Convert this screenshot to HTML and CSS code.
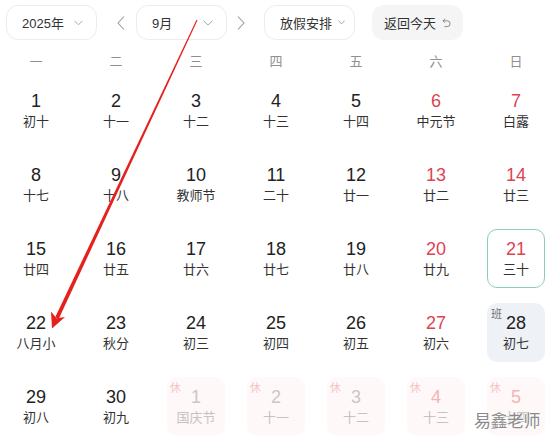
FILE: index.html
```html
<!DOCTYPE html>
<html lang="zh">
<head>
<meta charset="utf-8">
<title>日历</title>
<link rel="stylesheet" href="styles.css">
</head>
<body>
<div class="page">
  <div class="toolbar">
    <div class="select select-year"><span>2025年</span><svg class="caret" width="9" height="6" viewBox="0 0 9 6"><path d="M0.5 0.8 L4.5 4.8 L8.5 0.8" fill="none" stroke="#a8a8a8" stroke-width="1"/></svg></div>
    <svg class="nav nav-prev" width="8" height="14" viewBox="0 0 8 14"><path d="M7 0.5 L1 7 L7 13.5" fill="none" stroke="#9a9a9a" stroke-width="1.1"/></svg>
    <div class="select select-month"><span>9月</span><svg class="caret" width="10" height="6" viewBox="0 0 10 6"><path d="M0.5 0.8 L5 5 L9.5 0.8" fill="none" stroke="#a8a8a8" stroke-width="1"/></svg></div>
    <svg class="nav nav-next" width="8" height="14" viewBox="0 0 8 14"><path d="M1 0.5 L7 7 L1 13.5" fill="none" stroke="#9a9a9a" stroke-width="1.1"/></svg>
    <div class="select select-holiday"><span>放假安排</span><svg class="caret" width="7" height="5" viewBox="0 0 7 5"><path d="M0.5 0.6 L3.5 4 L6.5 0.6" fill="none" stroke="#a8a8a8" stroke-width="1"/></svg></div>
    <div class="today-btn"><span>返回今天</span><svg class="undo" width="9" height="10" viewBox="0 0 9 10"><path d="M3 0.8 L1 2.8 L3 4.8 M1 2.8 H5.2 A2.9 2.9 0 0 1 5.2 8.6 H2.5" fill="none" stroke="#8a8a8a" stroke-width="1"/></svg></div>
  </div>

  <div class="weekdays">
    <span>一</span><span>二</span><span>三</span><span>四</span><span>五</span><span>六</span><span>日</span>
  </div>

  <div class="days">
    <div class="day"><div class="num">1</div><div class="lunar">初十</div></div>
    <div class="day"><div class="num">2</div><div class="lunar">十一</div></div>
    <div class="day"><div class="num">3</div><div class="lunar">十二</div></div>
    <div class="day"><div class="num">4</div><div class="lunar">十三</div></div>
    <div class="day"><div class="num">5</div><div class="lunar">十四</div></div>
    <div class="day weekend"><div class="num">6</div><div class="lunar">中元节</div></div>
    <div class="day weekend"><div class="num">7</div><div class="lunar">白露</div></div>

    <div class="day"><div class="num">8</div><div class="lunar">十七</div></div>
    <div class="day"><div class="num">9</div><div class="lunar">十八</div></div>
    <div class="day"><div class="num">10</div><div class="lunar">教师节</div></div>
    <div class="day"><div class="num">11</div><div class="lunar">二十</div></div>
    <div class="day"><div class="num">12</div><div class="lunar">廿一</div></div>
    <div class="day weekend"><div class="num">13</div><div class="lunar">廿二</div></div>
    <div class="day weekend"><div class="num">14</div><div class="lunar">廿三</div></div>

    <div class="day"><div class="num">15</div><div class="lunar">廿四</div></div>
    <div class="day"><div class="num">16</div><div class="lunar">廿五</div></div>
    <div class="day"><div class="num">17</div><div class="lunar">廿六</div></div>
    <div class="day"><div class="num">18</div><div class="lunar">廿七</div></div>
    <div class="day"><div class="num">19</div><div class="lunar">廿八</div></div>
    <div class="day weekend"><div class="num">20</div><div class="lunar">廿九</div></div>
    <div class="day weekend today"><div class="num">21</div><div class="lunar">三十</div></div>

    <div class="day"><div class="num">22</div><div class="lunar">八月小</div></div>
    <div class="day"><div class="num">23</div><div class="lunar">秋分</div></div>
    <div class="day"><div class="num">24</div><div class="lunar">初三</div></div>
    <div class="day"><div class="num">25</div><div class="lunar">初四</div></div>
    <div class="day"><div class="num">26</div><div class="lunar">初五</div></div>
    <div class="day weekend"><div class="num">27</div><div class="lunar">初六</div></div>
    <div class="day workday"><span class="tag">班</span><div class="num">28</div><div class="lunar">初七</div></div>

    <div class="day"><div class="num">29</div><div class="lunar">初八</div></div>
    <div class="day"><div class="num">30</div><div class="lunar">初九</div></div>
    <div class="day next rest"><span class="tag">休</span><div class="num">1</div><div class="lunar">国庆节</div></div>
    <div class="day next rest"><span class="tag">休</span><div class="num">2</div><div class="lunar">十一</div></div>
    <div class="day next rest"><span class="tag">休</span><div class="num">3</div><div class="lunar">十二</div></div>
    <div class="day next rest weekend"><span class="tag">休</span><div class="num">4</div><div class="lunar">十三</div></div>
    <div class="day next rest weekend"><span class="tag">休</span><div class="num">5</div><div class="lunar">十四</div></div>
  </div>

  <svg class="annotation" width="548" height="443" viewBox="0 0 548 443">
    <polygon points="197.5,20.2 58.8,318.8 55.2,317.2 196.5,19.8" fill="#e5211d"/>
    <polygon points="52,328.5 51,311.5 56.5,318.2 65,317" fill="#e5211d"/>
  </svg>
  <div class="watermark">易鑫老师</div>
</div>
</body>
</html>
```

FILE: styles.css
```css
* {
  box-sizing: border-box;
}

html, body {
  margin: 0;
  padding: 0;
  background: #ffffff;
}

body {
  font-family: "Liberation Sans", "Noto Sans CJK SC", sans-serif;
  color: #333333;
}

.page {
  position: relative;
  width: 548px;
  height: 443px;
  overflow: hidden;
}

.toolbar {
  display: flex;
  align-items: center;
  padding: 5px 0 0 6px;
  height: 40px;
}

.select {
  flex: none;
  width: 91px;
  height: 35px;
  border: 1px solid #ececec;
  border-radius: 12px;
  display: flex;
  align-items: center;
  justify-content: space-between;
  font-size: 13px;
  color: #333333;
  background: #ffffff;
  white-space: nowrap;
}

.select-year {
  padding: 0 13px 0 15px;
  margin-right: 20px;
}

.select-month {
  padding: 0 13px 0 15px;
  margin: 0 10px 0 11px;
}

.select-holiday {
  padding: 0 0 0 15px;
  margin-left: 19px;
  justify-content: flex-start;
  gap: 6px;
}

.nav {
  display: block;
  flex: none;
}

.caret {
  display: block;
  flex: none;
}

.today-btn {
  flex: none;
  width: 91px;
  height: 35px;
  margin-left: 17px;
  border-radius: 12px;
  background: #f5f5f5;
  display: flex;
  align-items: center;
  padding-left: 12px;
  gap: 6px;
  font-size: 13px;
  color: #333333;
  white-space: nowrap;
}

.undo {
  display: block;
}

.weekdays {
  display: grid;
  grid-template-columns: repeat(7, 58px);
  column-gap: 22px;
  padding-left: 7px;
  margin-top: 12px;
  height: 20px;
  line-height: 20px;
  font-size: 13px;
  color: #8f8f8f;
  text-align: center;
}

.days {
  display: grid;
  grid-template-columns: repeat(7, 58px);
  grid-auto-rows: 59px;
  column-gap: 22px;
  row-gap: 15px;
  padding-left: 7px;
  margin-top: 9px;
}

.day {
  position: relative;
  border-radius: 10px;
  text-align: center;
  padding-top: 10px;
}

.num {
  font-size: 18px;
  line-height: 20px;
  color: #222222;
}

.lunar {
  margin-top: 3px;
  font-size: 13px;
  line-height: 16px;
  color: #333333;
}

.weekend .num {
  color: #dc4452;
}

.today {
  border: 1.5px solid #8dcfb3;
  padding-top: 8.5px;
}

.workday {
  background: #eef1f5;
}

.workday .num {
  color: #222222;
}

.tag {
  position: absolute;
  top: 5px;
  left: 4px;
  font-size: 11px;
  line-height: 12px;
  color: #707070;
}

.rest {
  background: #fff8f8;
}

.rest .tag {
  color: #f4c4c4;
  left: 3px;
}

.next .num {
  color: #c8c8c8;
}

.next .lunar {
  color: #c4c4c4;
}

.next.weekend .num {
  color: #f1b5b5;
}

.annotation {
  position: absolute;
  left: 0;
  top: 0;
  pointer-events: none;
}

.watermark {
  position: absolute;
  left: 474px;
  top: 412px;
  font-size: 17px;
  line-height: 20px;
  color: #8a8a8a;
  letter-spacing: -0.5px;
  text-shadow: 0 0 1px #ffffff, 0 0 2px #ffffff;
}
```
